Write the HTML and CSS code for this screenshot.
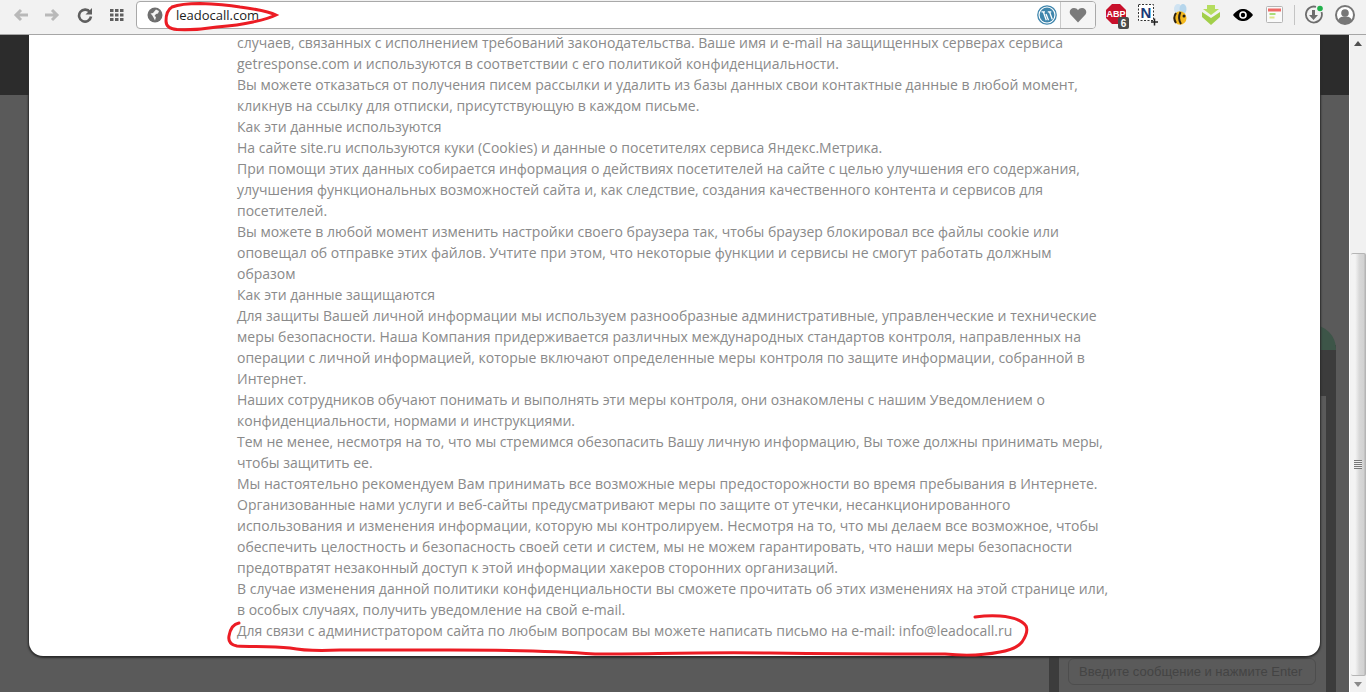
FILE: index.html
```html
<!DOCTYPE html>
<html lang="ru">
<head>
<meta charset="utf-8">
<title>leadocall.com</title>
<link rel="stylesheet" href="styles.css">
</head>
<body>
<div class="browser">
  <header class="toolbar">
    <nav class="nav">
      <svg width="18" height="16" viewBox="0 0 18 16"><path d="M16 8H5M9 3L4 8l5 5" fill="none" stroke="#b9b9b9" stroke-width="3"/></svg>
      <svg width="18" height="16" viewBox="0 0 18 16"><path d="M2 8h11M9 3l5 5-5 5" fill="none" stroke="#b9b9b9" stroke-width="3"/></svg>
      <svg width="16" height="16" viewBox="0 0 16 16"><path d="M13 5.2A6 6 0 1 0 14 9.5" fill="none" stroke="#5f5f5f" stroke-width="2.6"/><path d="M15 1v6.5H8.5z" fill="#5f5f5f"/></svg>
      <svg width="14" height="12" viewBox="0 0 14 12"><path d="M0 0h3.5v3H0zM5 0h3.5v3H5zM10 0h3.500v3H10zM0 4.500h3.500v3H0zM5 4.500h3.500v3H5zM10 4.500h3.500v3H10zM0 9h3.500v3H0zM5 9h3.500v3H5zM10 9h3.500v3H10z" fill="#5f5f5f"/></svg>
    </nav>
    <div class="omnibox">
      <svg class="globe" width="16" height="16" viewBox="0 0 16 16"><circle cx="8" cy="8" r="7.500" fill="#6f6f6f"/><path d="M9 2.500l3 1.500-1 2.500-2 .5-1.500 2L9 10l-1 3.500-1.500-3L5 8 3.500 6.500 6 6z" fill="#f4f4f4"/></svg>
      <span class="url">leadocall.com</span>
      <svg class="wp" width="20" height="20" viewBox="0 0 20 20"><circle cx="10" cy="10" r="9.200" fill="none" stroke="#3f86ad" stroke-width="1.300"/><circle cx="10" cy="10" r="7.400" fill="#3f86ad"/><path d="M4.500 6.800h3.500M6.300 6.800l3 8.500M10.800 6.800h3.500M12.500 6.800l2.700 7.500M9 9l2.500 6.300" stroke="#fff" stroke-width="1.300" fill="none"/></svg>
      <div class="star">
        <svg width="18" height="16" viewBox="0 0 18 16"><path d="M9 15.500L1.500 7.500C-.5 4.500 1.500 1 5 1c1.700 0 3.200.8 4 2.300C9.800 1.800 11.300 1 13 1c3.500 0 5.500 3.500 3.500 6.500z" fill="#7b7b7b"/></svg>
      </div>
    </div>
    <div class="extensions">
      <svg width="26" height="28" viewBox="0 0 26 28"><path d="M9 3h8l6 6v8l-6 6H9l-6-6V9z" fill="#c8102b"/><text x="13" y="16" class="abp">ABP</text><rect x="15" y="16" width="11" height="12" rx="2" fill="#4a4a4a"/><text x="20.500" y="26" class="badge">6</text></svg>
      <svg class="shift" width="22" height="24" viewBox="0 0 22 24"><rect x="1.500" y="1.500" width="15" height="16" fill="#fff" stroke="#333" stroke-dasharray="2 1.500"/><text x="9" y="15" class="ntext">N</text><path d="M14 19h7M17.500 15.500v7" stroke="#222" stroke-width="1.500"/></svg>
      <svg width="20" height="24" viewBox="0 0 20 24"><ellipse cx="8" cy="6" rx="4" ry="5" fill="#cfe3f2"/><ellipse cx="13" cy="6" rx="3.500" ry="5" fill="#b6d6ec"/><ellipse cx="10" cy="15" rx="6.500" ry="6.800" fill="#f4b91f"/><path d="M6 10c-2 3-2 7 0 10M10.500 9c-2 4-2 8 .5 12" fill="none" stroke="#2b2216" stroke-width="2"/><circle cx="14" cy="13" r="1.500" fill="#2b2216"/></svg>
      <svg width="20" height="20" viewBox="0 0 20 20"><path d="M6 0h8v4h4l-8 6-8-6h4z" fill="#b5dd5f"/><path d="M1 7l9 6 9-6v5l-9 8-9-8z" fill="#a2cf4a"/></svg>
      <svg width="20" height="12" viewBox="0 0 20 12"><path d="M0 6C4 1 7 0 10 0s6 1 10 6c-4 5-7 6-10 6S4 11 0 6z" fill="#000"/><circle cx="10" cy="6" r="3.800" fill="#fff"/><circle cx="10" cy="6" r="2.200" fill="#000"/></svg>
      <svg width="18" height="18" viewBox="0 0 18 18"><rect x=".5" y=".5" width="16" height="16" rx="1" fill="#fafafa" stroke="#b5b5b5"/><rect x="2" y="2.500" width="13" height="3" fill="#ee6a66"/><rect x="3.500" y="7" width="6" height="2" fill="#a9dc7a"/><rect x="3.500" y="10.500" width="5" height="2" fill="#dfe58a"/></svg>
      <span class="sep"></span>
      <svg width="20" height="20" viewBox="0 0 20 20"><path d="M12 1.800A8 8 0 1 0 17.500 7" fill="none" stroke="#6d6d6d" stroke-width="1.800"/><path d="M8 5h3v5h3l-4.500 5L5 10h3z" fill="#6d6d6d"/><circle cx="16" cy="3.500" r="2.800" fill="#22b14c"/></svg>
      <svg width="20" height="20" viewBox="0 0 20 20"><circle cx="10" cy="10" r="9" fill="#fff" stroke="#777" stroke-width="2"/><circle cx="10" cy="8" r="3.800" fill="#777"/><path d="M3 16c1-4 4-4.500 7-4.500s6 .5 7 4.500c-2 2-4 3-7 3s-5-1-7-3z" fill="#777"/></svg>
    </div>
  </header>
  <div class="viewport">
    <main class="page">
      <div class="topband"></div>
      <div class="backdrop">
        <aside class="chat">
          <div class="chat-head"></div>
          <div class="chat-panel">
            <div class="chat-input">Введите сообщение и нажмите Enter</div>
          </div>
        </aside>
      </div>
      <section class="modal">
        <div class="policy">
          <p>случаев, связанных с исполнением требований законодательства. Ваше имя и e-mail на защищенных серверах сервиса getresponse.com и используются в соответствии с его политикой конфиденциальности.</p>
          <p>Вы можете отказаться от получения писем рассылки и удалить из базы данных свои контактные данные в любой момент, кликнув на ссылку для отписки, присутствующую в каждом письме.</p>
          <p>Как эти данные используются</p>
          <p>На сайте site.ru используются куки (Cookies) и данные о посетителях сервиса Яндекс.Метрика.</p>
          <p>При помощи этих данных собирается информация о действиях посетителей на сайте с целью улучшения его содержания, улучшения функциональных возможностей сайта и, как следствие, создания качественного контента и сервисов для посетителей.</p>
          <p>Вы можете в любой момент изменить настройки своего браузера так, чтобы браузер блокировал все файлы cookie или оповещал об отправке этих файлов. Учтите при этом, что некоторые функции и сервисы не смогут работать должным образом</p>
          <p>Как эти данные защищаются</p>
          <p>Для защиты Вашей личной информации мы используем разнообразные административные, управленческие и технические меры безопасности. Наша Компания придерживается различных международных стандартов контроля, направленных на операции с личной информацией, которые включают определенные меры контроля по защите информации, собранной в Интернет.</p>
          <p>Наших сотрудников обучают понимать и выполнять эти меры контроля, они ознакомлены с нашим Уведомлением о конфиденциальности, нормами и инструкциями.</p>
          <p>Тем не менее, несмотря на то, что мы стремимся обезопасить Вашу личную информацию, Вы тоже должны принимать меры, чтобы защитить ее.</p>
          <p>Мы настоятельно рекомендуем Вам принимать все возможные меры предосторожности во время пребывания в Интернете. Организованные нами услуги и веб-сайты предусматривают меры по защите от утечки, несанкционированного использования и изменения информации, которую мы контролируем. Несмотря на то, что мы делаем все возможное, чтобы обеспечить целостность и безопасность своей сети и систем, мы не можем гарантировать, что наши меры безопасности предотвратят незаконный доступ к этой информации хакеров сторонних организаций.</p>
          <p>В случае изменения данной политики конфиденциальности вы сможете прочитать об этих изменениях на этой странице или, в особых случаях, получить уведомление на свой e-mail.</p>
          <p>Для связи с администратором сайта по любым вопросам вы можете написать письмо на e-mail: info@leadocall.ru</p>
        </div>
      </section>
    </main>
    <div class="scrollbar">
      <span class="arrow-up"></span>
      <div class="thumb"><span class="grip"></span></div>
      <span class="arrow-down"></span>
    </div>
  </div>
  <svg class="scribble" width="1366" height="692" viewBox="0 0 1366 692">
    <path d="M172 7C180 4 190 3.500 200 3.500C215 4 228 5 240 7C255 9 268 11 276 15C270 18 262 20 253 22C240 25 230 26 217 27C205 29 190 30 177 29.500C170 29 166 26 166 21C166 15 167 10 172 7" />
    <path d="M239 623C233 624 230 630 229 636C228 642 231 645 237 646C250 647 270 646 290 648C305 651 320 651 340 650L450 650C500 650 555 651 595 654C650 654 700 652 770 653C840 654 900 654 945 654C965 656 985 655 1000 652C1012 650 1018 647 1022 642C1026 636 1028 630 1026 626C1022 620 1012 617 1000 616C990 615 982 616 975 617" />
  </svg>
</div>
</body>
</html>
```

FILE: styles.css
```css
* {
  box-sizing: border-box;
}
html, body {
  margin: 0;
  height: 100%;
  overflow: hidden;
}
.browser {
  position: relative;
  display: flex;
  flex-direction: column;
  height: 692px;
  font-family: "Open Sans", "Liberation Sans", sans-serif;
}
.toolbar {
  display: flex;
  flex: none;
  height: 35px;
  padding-top: 1px;
  background: #f2f2f2;
  border-bottom: 1px solid #a6a6a6;
}
.nav {
  display: grid;
  grid-template-columns: 32px 30px 36px 28px;
  justify-items: center;
  align-items: center;
  height: 28px;
  margin: 0 5px;
}
.omnibox {
  display: flex;
  flex: 1;
  align-items: center;
  height: 28px;
  padding-left: 10px;
  background: #fff;
  border: 1px solid #a9a9a9;
  border-radius: 4px;
}
.url {
  flex: 1;
  margin-left: 13px;
  font-size: 13px;
  color: #1c1c1c;
}
.wp {
  margin-right: 3px;
}
.star {
  display: flex;
  justify-content: center;
  align-items: center;
  width: 35px;
  height: 100%;
  background: #f5f5f5;
  border-left: 1px solid #c9c9c9;
  border-radius: 0 3px 3px 0;
}
.extensions {
  display: grid;
  grid-template-columns: 30px 32px 34px 28px 36px 28px 10px 30px 32px;
  justify-items: center;
  align-items: center;
  height: 28px;
  margin: 0 5px;
}
.shift {
  margin-left: 2px;
}
.sep {
  width: 1px;
  height: 20px;
  background: #c4c4c4;
}
.abp {
  font: 700 9px "Liberation Sans", sans-serif;
  fill: #fff;
  text-anchor: middle;
}
.badge {
  font: 700 10px "Liberation Sans", sans-serif;
  fill: #fff;
  text-anchor: middle;
}
.ntext {
  font: 700 15px "Liberation Sans", sans-serif;
  fill: #1a3a7a;
  text-anchor: middle;
}
.viewport {
  display: flex;
  flex: 1;
  min-height: 0;
}
.page {
  position: relative;
  display: flex;
  flex-direction: column;
  flex: 1;
  overflow: hidden;
  background: #5a5a5a;
}
.topband {
  flex: none;
  height: 60px;
  background: #2c2c2c;
}
.backdrop {
  display: flex;
  flex: 1;
  justify-content: flex-end;
  padding: 230px 13px 0 0;
}
.chat {
  display: flex;
  flex-direction: column;
  width: 287px;
  padding: 0 10px;
  background: linear-gradient(#5a5a5a 0, #5a5a5a 20px, #3c3c3c 20px);
}
.chat-head {
  flex: none;
  height: 25px;
  margin: 0 -10px;
  background: #3d5548;
  border-radius: 0 24px 0 0;
}
.chat-panel {
  display: flex;
  flex: 1;
  align-items: flex-end;
  margin-top: 46px;
  padding: 0 10px 7px 9px;
  background: #5a5a5a;
}
.chat-input {
  flex: 1;
  height: 27px;
  padding-left: 10px;
  white-space: nowrap;
  border: 1px solid #4d4d4d;
  border-radius: 6px;
  font: 13px/25px "Liberation Sans", sans-serif;
  color: #444;
}
.modal {
  position: absolute;
  top: -20px;
  left: 29px;
  width: 1291px;
  bottom: 36px;
  display: flex;
  flex-direction: column;
  justify-content: flex-end;
  padding: 0 0 15px 208px;
  overflow: hidden;
  background: #fff;
  border-radius: 14px;
  box-shadow: 0 1px 2px 1px #2b2b2b;
}
.policy {
  width: 875px;
  font-size: 14px;
  line-height: 21px;
  color: #8a8a8a;
}
.policy p {
  margin: 0;
}
.scrollbar {
  display: flex;
  flex-direction: column;
  align-items: center;
  flex: none;
  width: 17px;
  background: #f1f1f1;
  border-left: 1px solid #fff;
}
.arrow-up, .arrow-down {
  flex: none;
  width: 0;
  height: 0;
  border-left: 4px solid transparent;
  border-right: 4px solid transparent;
}
.arrow-up {
  margin-top: 6px;
  border-bottom: 5px solid #505050;
}
.arrow-down {
  margin-bottom: 5px;
  border-top: 5px solid #8a8a8a;
}
.thumb {
  display: flex;
  justify-content: center;
  align-items: center;
  width: 15px;
  margin: 207px 0 6px;
  flex: 1;
  background: linear-gradient(90deg, #f3f3f3 0, #f3f3f3 30%, #d8d8d8 60%, #d2d2d2 90%, #bbb 100%);
  border: 1px solid #b5b5b5;
  border-width: 1px 1px 1px 0;
  border-radius: 2px;
}
.grip {
  width: 8px;
  height: 9px;
  background: repeating-linear-gradient(180deg, #777 0, #777 1px, #eee 1px, #eee 2px);
}
.scribble {
  position: absolute;
  top: 0;
  left: 0;
  pointer-events: none;
}
.scribble path {
  fill: none;
  stroke: #ec1c24;
  stroke-width: 3;
  stroke-linecap: round;
}
```
